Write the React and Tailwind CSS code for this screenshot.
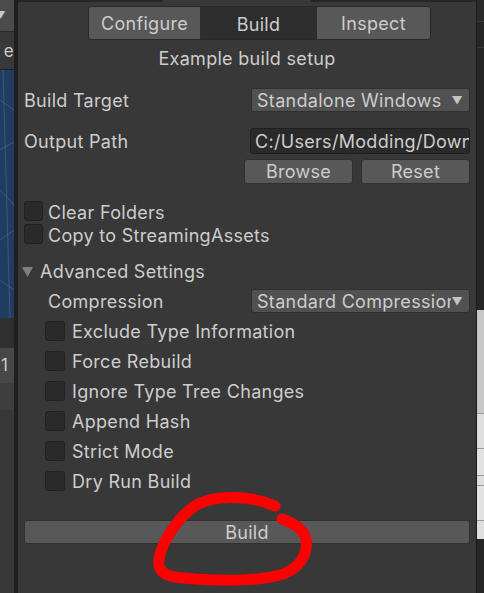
import { useState } from "react";

const Checkbox = ({ size = "w-[20px] h-[20px]" }) => (
  <div className={`${size} shrink-0 rounded-[3px] bg-[#2a2a2a] border border-[#212121]`} />
);

const Dropdown = ({ label }) => (
  <div className="flex items-center w-[219px] h-[24px] rounded-[3px] bg-[#515151] border border-[#303030] pl-[5px] pr-[6px] overflow-hidden">
    <span className="flex-1 whitespace-nowrap overflow-hidden">{label}</span>
    <span className="text-[11px] text-[#c4c4c4] ml-[1px]">▼</span>
  </div>
);

const CheckRow = ({ label }) => (
  <div className="flex items-center h-[30px] pl-[21px]">
    <Checkbox />
    <span className="ml-[7px]">{label}</span>
  </div>
);

const App = () => {
  const [tab] = useState("Build");
  const tabs = ["Configure", "Build", "Inspect"];
  const advanced = [
    "Exclude Type Information",
    "Force Rebuild",
    "Ignore Type Tree Changes",
    "Append Hash",
    "Strict Mode",
    "Dry Run Build",
  ];

  return (
    <div
      className="flex w-[484px] h-[593px] overflow-hidden bg-[#383838] text-[#cdcdcd] text-[18px] tracking-[0.3px]"
      style={{ fontFamily: "Inter, 'Noto Sans', sans-serif" }}
    >
      {/* left neighbour window */}
      <div className="w-[14px] shrink-0 flex flex-col overflow-hidden">
        <div className="h-[32px] bg-[#4b4b4b] border-b border-[#2a2a2a] flex items-center justify-end pr-[8px] text-[10px] text-[#c8c8c8]">
          ▼
        </div>
        <div className="h-[38px] bg-[#383838] border-b border-[#232323] flex items-end justify-end pb-[9px] text-[17px] leading-none">
          e
        </div>
        <div className="h-[248px] bg-[#1f3d5f] relative overflow-hidden">
          <svg width="14" height="248" className="absolute inset-0">
            <path d="M0 30 L14 40 M0 80 L14 72 M0 120 L14 135 M0 170 L14 160 M0 210 L14 220 M3 0 L10 248" stroke="#4d6f92" strokeWidth="0.6" fill="none" />
          </svg>
        </div>
        <div className="h-[30px] bg-[#2f2f2f]" />
        <div className="h-[35px] bg-[#474747] flex items-center text-[17px] pl-[1px]">1</div>
        <div className="h-[27px] bg-[#3e3e3e]" />
        <div className="flex-1 bg-[#383838]" />
      </div>
      <div className="w-[4px] shrink-0 bg-[#1f1f1f]" />

      {/* main panel */}
      <div className="w-[458px] shrink-0 flex flex-col px-[6px] relative">
        <div className="h-[2px] -mx-[6px] flex">
          <div className="w-[145px] bg-[#262626]" />
          <div className="w-[147px] bg-[#383838]" />
          <div className="flex-1 bg-[#262626]" />
        </div>
        <div className="mt-[4px] h-[34px] ml-[64px] w-[343px] flex rounded-[4px] border border-[#292929] overflow-hidden">
          {tabs.map((t) => (
            <div
              key={t}
              className={`flex items-center justify-center ${
                t === "Configure" ? "w-[112px]" : t === "Build" ? "w-[116px]" : "flex-1"
              } ${t === tab ? "bg-[#2d2d2d] border-t-2 border-[#1f1f1f]" : "bg-[#585858]"} ${
                t !== "Inspect" ? "border-r border-[#2e2e2e]" : ""
              }`}
            >
              {t}
            </div>
          ))}
        </div>

        <div className="mt-[8px] h-[22px] leading-[22px] text-center">Example build setup</div>

        <div className="mt-[18px] h-[24px] flex items-center justify-between">
          <span className="pt-[1px]">Build Target</span>
          <Dropdown label="Standalone Windows" />
        </div>

        <div className="mt-[16px] h-[26px] flex items-center justify-between">
          <span className="pt-[1px]">Output Path</span>
          <div className="w-[220px] h-[26px] rounded-[3px] bg-[#2a2a2a] border border-[#1f1f1f] pl-[4px] flex items-center overflow-hidden whitespace-nowrap">
            C:/Users/Modding/Downloads/Build
          </div>
        </div>

        <div className="mt-[5px] h-[25px] flex justify-end gap-[8px]">
          <div className="w-[109px] rounded-[3px] bg-[#585858] border border-[#303030] flex items-center justify-center">
            Browse
          </div>
          <div className="w-[109px] rounded-[3px] bg-[#585858] border border-[#303030] flex items-center justify-center">
            Reset
          </div>
        </div>

        <div className="mt-[17px] h-[20px] flex items-center">
          <Checkbox size="w-[19px] h-[20px]" />
          <span className="ml-[5px] pt-[3px]">Clear Folders</span>
        </div>
        <div className="mt-[3px] h-[20px] flex items-center">
          <Checkbox size="w-[19px] h-[20px]" />
          <span className="ml-[5px] pt-[3px]">Copy to StreamingAssets</span>
        </div>

        <div className="mt-[17px] h-[20px] flex items-center">
          <svg width="11" height="11" viewBox="0 0 11 11" className="ml-[-2px]">
            <path d="M0 1 L11 1 L5.5 11 Z" fill="#7f7f7f" />
          </svg>
          <span className="ml-[7px] pt-[1px]">Advanced Settings</span>
        </div>

        <div className="mt-[8px] h-[24px] flex items-center justify-between">
          <span className="ml-[24px] pt-[1px]">Compression</span>
          <Dropdown label="Standard Compression" />
        </div>

        <div className="mt-[3px] flex flex-col">
          {advanced.map((a) => (
            <CheckRow key={a} label={a} />
          ))}
        </div>

        <div className="mt-[24px] h-[24px] rounded-[3px] bg-[#585858] border border-[#303030] flex items-center justify-center">
          Build
        </div>

        <svg
          width="180"
          height="110"
          viewBox="0 0 180 110"
          className="absolute left-[130px] top-[484px] pointer-events-none"
        >
          <path
            d="M127 22 C105 12 70 10 50 20 C30 32 14 58 11 75 C9 88 18 93 35 94 C70 97 110 98 135 90 C152 84 160 70 158 56 C157 46 148 40 134 35"
            stroke="#ff0000"
            strokeWidth="11"
            strokeLinecap="round"
            fill="none"
          />
        </svg>
      </div>

      <div className="w-[1px] shrink-0 bg-[#1a1a1a]" />
      {/* right neighbour window */}
      <div className="flex-1 flex flex-col bg-[#262626]">
        <div className="h-[22px] bg-[#2a2a2a] border-b border-[#3a3a3a]" />
        <div className="h-[26px] border-b border-[#3a3a3a]" />
        <div className="h-[262px]" />
        <div className="h-[104px] bg-[#c8c8c8] border-b border-[#9a9a9a]" />
        <div className="h-[35px] bg-[#dedede] border-b border-[#9a9a9a]" />
        <div className="h-[27px] bg-[#e2e2e2] border-b border-[#9a9a9a]" />
        <div className="h-[10px] bg-[#dedede] border-b border-[#9a9a9a]" />
        <div className="h-[35px] bg-[#e2e2e2] border-b border-[#9a9a9a]" />
        <div className="h-[18px] bg-[#dedede]" />
        <div className="flex-1 bg-[#262626]" />
      </div>
    </div>
  );
};

export default App;
